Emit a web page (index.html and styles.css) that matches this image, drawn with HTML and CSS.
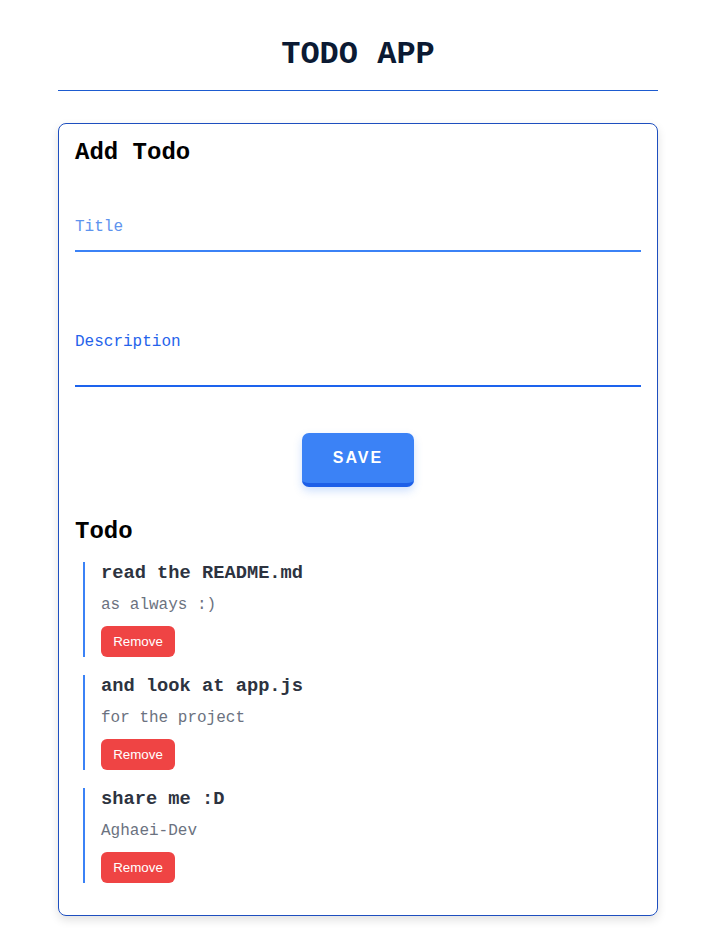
FILE: index.html
```html
<!DOCTYPE html>
<html lang="en">
<head>
<meta charset="utf-8">
<title>Todo App</title>
<link rel="stylesheet" href="styles.css">
</head>
<body>
<div class="app">
  <header class="header">
    <h1 class="app-title">TODO APP</h1>
  </header>
  <main class="card">
    <h2 class="section-title">Add Todo</h2>
    <form class="form">
      <label class="field field-title">
        <span class="field-label label-light">Title</span>
        <span class="field-line"></span>
      </label>
      <label class="field field-desc">
        <span class="field-label label-strong">Description</span>
        <span class="field-line"></span>
      </label>
      <div class="actions">
        <button type="button" class="save-btn">SAVE</button>
      </div>
    </form>
    <h2 class="section-title list-title">Todo</h2>
    <ul class="todo-list">
      <li class="todo">
        <h3 class="todo-title">read the README.md</h3>
        <p class="todo-desc">as always :)</p>
        <button type="button" class="remove-btn">Remove</button>
      </li>
      <li class="todo">
        <h3 class="todo-title">and look at app.js</h3>
        <p class="todo-desc">for the project</p>
        <button type="button" class="remove-btn">Remove</button>
      </li>
      <li class="todo">
        <h3 class="todo-title">share me :D</h3>
        <p class="todo-desc">Aghaei-Dev</p>
        <button type="button" class="remove-btn">Remove</button>
      </li>
    </ul>
  </main>
</div>
</body>
</html>
```
FILE: styles.css
```css
* { box-sizing: border-box; }
body {
  margin: 0;
  background: #fff;
  font-family: "Liberation Mono", "DejaVu Sans Mono", monospace;
  color: #000;
}
.app {
  width: 600px;
  margin: 0 60px 0 58px;
  padding-bottom: 36px;
}
.header {
  border-bottom: 1px solid #1d5bd0;
  padding: 36px 0 16px;
  text-align: center;
}
.app-title {
  margin: 0;
  font-size: 32px;
  line-height: 38px;
  font-weight: 700;
  color: #0b1a33;
}
.card {
  margin-top: 32px;
  border: 1px solid #1e4fbf;
  border-radius: 8px;
  box-shadow: 0 4px 10px rgba(0,0,0,0.12);
  padding: 14px 16px 32px;
}
.section-title {
  margin: 0;
  font-size: 24px;
  line-height: 30px;
  font-weight: 700;
}
.form {
  display: flex;
  flex-direction: column;
}
.field {
  display: flex;
  flex-direction: column;
}
.field-title { margin-top: 50px; }
.field-desc { margin-top: 81px; }
.field-label {
  font-size: 16px;
  line-height: 18px;
}
.label-light { color: #5e93ee; }
.label-strong { color: #2563eb; }
.field-line {
  display: block;
  height: 2px;
}
.field-title .field-line { margin-top: 14px; background: #3b82f6; }
.field-desc .field-line { margin-top: 34px; background: #1d63ed; }
.actions {
  display: flex;
  justify-content: center;
  margin-top: 46px;
}
.save-btn {
  width: 112px;
  height: 54px;
  border: 0;
  border-bottom: 4px solid #1d5fe8;
  border-radius: 7px;
  background: #3b82f6;
  color: #fff;
  font-family: "Liberation Sans", Arial, sans-serif;
  font-weight: 700;
  font-size: 16px;
  letter-spacing: 2px;
  box-shadow: 0 4px 8px rgba(59,130,246,0.25);
}
.list-title { margin-top: 30px; }
.todo-list {
  list-style: none;
  margin: 15px 0 0 8px;
  padding: 0;
  display: flex;
  flex-direction: column;
  gap: 18px;
}
.todo {
  border-left: 2px solid #3b82f6;
  padding-left: 16px;
}
.todo-title {
  margin: 0;
  font-size: 18.72px;
  line-height: 22px;
  font-weight: 700;
  color: #2d3340;
}
.todo-desc {
  margin: 11px 0 0;
  font-size: 16px;
  line-height: 20px;
  color: #6b7280;
}
.remove-btn {
  margin-top: 11px;
  display: block;
  width: 74px;
  height: 31px;
  border: 0;
  border-radius: 6px;
  background: #ef4444;
  color: #fff;
  font-family: "Liberation Sans", Arial, sans-serif;
  font-size: 13.33px;
}
```
